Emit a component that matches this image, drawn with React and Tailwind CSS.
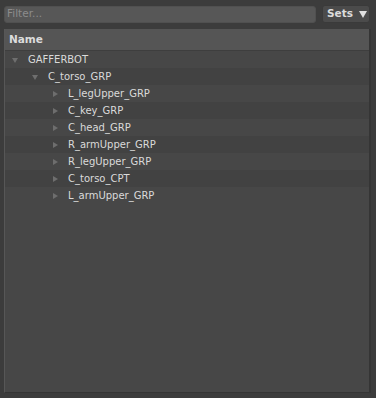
import React from "react";

const Tri = ({ down }) => (
  <svg width="8" height="8" viewBox="0 0 8 8" className="shrink-0">
    {down ? (
      <polygon points="1,2 7,2 4,7" fill="#6e6e6e" />
    ) : (
      <polygon points="2,1 7,4 2,7" fill="#6e6e6e" />
    )}
  </svg>
);

const rows = [
  { label: "GAFFERBOT", depth: 0, open: true },
  { label: "C_torso_GRP", depth: 1, open: true },
  { label: "L_legUpper_GRP", depth: 2 },
  { label: "C_key_GRP", depth: 2 },
  { label: "C_head_GRP", depth: 2 },
  { label: "R_armUpper_GRP", depth: 2 },
  { label: "R_legUpper_GRP", depth: 2 },
  { label: "C_torso_CPT", depth: 2 },
  { label: "L_armUpper_GRP", depth: 2 },
];

const pads = ["pl-[6px]", "pl-[26px]", "pl-[46px]"];

export default function App() {
  return (
    <div
      className="w-[376px] h-[398px] bg-[#3c3c3c] flex flex-col pl-[4px] pr-[4px] pt-[5px] pb-[5px] text-[10.5px]"
      style={{ fontFamily: '"DejaVu Sans", sans-serif' }}
    >
      <div className="flex items-center h-[18px]">
        <div className="flex-1 h-[17px] rounded-[3px] bg-[#575757] border border-[#505050] flex items-center pl-[2px] text-[#8c8c8c]">
          Filter...
        </div>
        <div className="ml-[6px] mr-[2px] w-[48px] h-[18px] rounded-[3px] bg-[#4b4b4b] border border-[#3a3a3a] flex items-center pl-[4px] text-[#dcdcdc] font-bold">
          <span>Sets</span>
          <svg width="8" height="7" viewBox="0 0 8 7" className="ml-[6px]">
            <polygon points="0,0 8,0 4,7" fill="#e0e0e0" />
          </svg>
        </div>
      </div>
      <div className="mt-[6px] flex-1 mr-[1px] flex flex-col bg-[#474747] border-l border-[#575757] border-r-2 border-r-[#353535] border-b border-b-[#353535]">
        <div className="h-[22px] bg-[#555555] border-b border-[#3e3e3e] flex items-center pl-[4px] font-bold text-[#dcdcdc]">
          Name
        </div>
        {rows.map((r, i) => (
          <div
            key={r.label}
            className={`h-[17px] flex items-center ${pads[r.depth]} ${
              i % 2 === 0 ? "bg-[#474747]" : "bg-[#424242]"
            } text-[#dadada] text-[10px]`}
          >
            <Tri down={r.open} />
            <span className="ml-[9px]">{r.label}</span>
          </div>
        ))}
      </div>
    </div>
  );
}
